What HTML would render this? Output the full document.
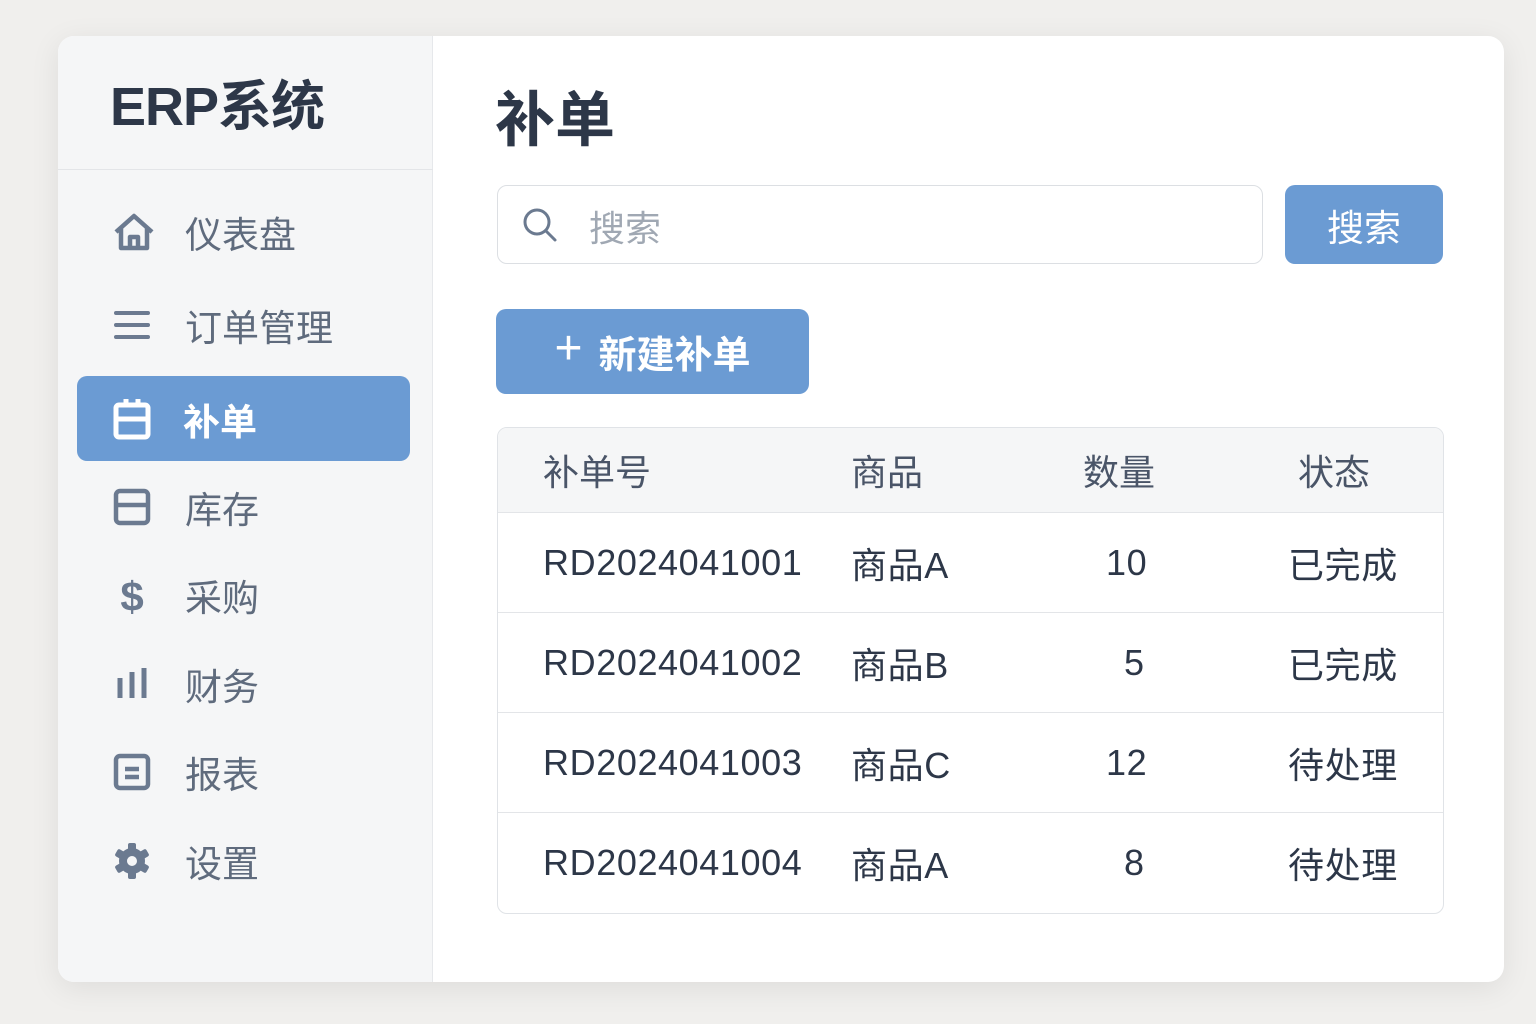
<!DOCTYPE html>
<html><head><meta charset="utf-8"><style>
*{margin:0;padding:0;box-sizing:border-box}
body{width:1536px;height:1024px;background:#f0efed;font-family:"Liberation Sans","Noto Sans CJK SC",sans-serif;position:relative;overflow:hidden}
.card{position:absolute;left:58px;top:36px;width:1446px;height:946px;background:#fff;border-radius:16px;box-shadow:0 6px 30px rgba(0,0,0,.08);overflow:hidden}
.side{position:absolute;left:0;top:0;width:375px;height:100%;background:#f5f6f7;border-right:1px solid #e6e8eb}
.logo{position:absolute;left:52px;top:26px;font-size:54px;font-weight:bold;color:#2d3748;letter-spacing:-1px}
.div{position:absolute;left:0;top:133px;width:375px;height:1px;background:#e3e5e8}
.nav{position:absolute;left:0;width:375px;height:60px;font-size:37px;color:#5f6b7d;display:flex;align-items:center}
.nav svg{position:absolute;left:54px}
.nav span{position:absolute;left:127px}
.active{left:19px;width:333px;height:85px;background:#6b9bd3;border-radius:10px;color:#fff;font-weight:bold}
.active svg{left:35px}.active span{left:106px}
.abs{position:absolute}
.title{left:437px;top:36px;font-size:60px;font-weight:bold;color:#2d3748}
.search{left:439px;top:149px;width:766px;height:79px;border:1.5px solid #dcdfe3;border-radius:10px}
.btn{background:#6b9bd3;color:#fff;border-radius:10px;display:flex;align-items:center;justify-content:center;font-size:37px}
.table{left:439px;top:391px;width:947px;height:487px;border:1.5px solid #e0e3e7;border-radius:10px;overflow:hidden}
.row{position:absolute;left:0;width:100%;height:100px;border-top:1.5px solid #e3e5e8;font-size:36px;color:#2d3748;letter-spacing:0.6px}
.row div{position:absolute;top:50%;transform:translateY(-50%)}
.hd{top:0;height:84px;border-top:none;background:#f5f6f7;color:#4a5568;letter-spacing:0}
</style></head><body>
<div class="card">
<div class="side">
<div class="logo">ERP系统</div>
<div class="div"></div>
<div class="nav" style="top:166px"><svg width="44" height="44" viewBox="0 0 44 44" fill="none" stroke="#6b7a90" stroke-width="4.5" stroke-linejoin="round"><path d="M4 22 L22 6 L40 22 M9 18 V38 H35 V18 M18 38 V27 H26 V38"/></svg><span>仪表盘</span></div>
<div class="nav" style="top:259px"><svg width="40" height="40" viewBox="0 0 40 40" stroke="#6b7a90" stroke-width="4" stroke-linecap="round"><path d="M4 8H36M4 20H36M4 32H36"/></svg><span>订单管理</span></div>
<div class="nav active" style="top:340px"><svg width="40" height="44" viewBox="0 0 40 44" fill="none" stroke="#fff" stroke-width="5"><rect x="4" y="8" width="32" height="32" rx="3"/><path d="M4 22H36M14 2V10M26 2V10"/></svg><span>补单</span></div>
<div class="nav" style="top:441px"><svg width="40" height="40" viewBox="0 0 40 40" fill="none" stroke="#6b7a90" stroke-width="4.5"><rect x="4" y="4" width="32" height="32" rx="4"/><path d="M4 18H36"/></svg><span>库存</span></div>
<div class="nav" style="top:529px"><svg width="40" height="44" viewBox="0 0 40 44"><text x="20" y="38" font-size="42" font-weight="bold" fill="#6b7a90" text-anchor="middle" font-family="Liberation Sans">$</text></svg><span>采购</span></div>
<div class="nav" style="top:618px"><svg width="40" height="40" viewBox="0 0 40 40" stroke="#6b7a90" stroke-width="5"><path d="M8 14V34M20 8V34M32 4V34"/></svg><span>财务</span></div>
<div class="nav" style="top:706px"><svg width="40" height="40" viewBox="0 0 40 40" fill="none" stroke="#6b7a90" stroke-width="4.5"><rect x="4" y="4" width="32" height="32" rx="4"/><path d="M13 17H27M13 25H27"/></svg><span>报表</span></div>
<div class="nav" style="top:795px"><svg width="40" height="40" viewBox="0 0 40 40"><g fill="#6b7a90"><circle cx="20" cy="20" r="13"/><rect x="16" y="2" width="8" height="36" rx="2"/><rect x="16" y="2" width="8" height="36" rx="2" transform="rotate(60 20 20)"/><rect x="16" y="2" width="8" height="36" rx="2" transform="rotate(120 20 20)"/></g><circle cx="20" cy="20" r="5" fill="#f5f6f7"/></svg><span>设置</span></div>
</div>
<div class="abs title">补单</div>
<div class="abs search"><svg class="abs" style="left:24px;top:21px" width="36" height="36" viewBox="0 0 36 36" fill="none" stroke="#6b7a90" stroke-width="3"><circle cx="15" cy="15" r="12"/><path d="M24 24L33 33" stroke-linecap="round"/></svg><div class="abs" style="left:91px;top:14px;font-size:36px;color:#a0a8b3">搜索</div></div>
<div class="abs btn" style="left:1227px;top:149px;width:158px;height:79px">搜索</div>
<div class="abs btn" style="left:438px;top:273px;width:313px;height:85px;font-weight:bold;font-size:38px"><span style="font-weight:normal;font-size:48px;margin-right:16px;margin-top:-6px">+</span>新建补单</div>
<div class="abs table">
<div class="row hd"><div style="left:45px">补单号</div><div style="left:353px">商品</div><div style="left:585px">数量</div><div style="left:800px">状态</div></div>
<div class="row" style="top:84px"><div style="left:45px">RD2024041001</div><div style="left:353px">商品A</div><div style="left:608px">10</div><div style="left:790px">已完成</div></div>
<div class="row" style="top:184px"><div style="left:45px">RD2024041002</div><div style="left:353px">商品B</div><div style="left:626px">5</div><div style="left:790px">已完成</div></div>
<div class="row" style="top:284px"><div style="left:45px">RD2024041003</div><div style="left:353px">商品C</div><div style="left:608px">12</div><div style="left:790px">待处理</div></div>
<div class="row" style="top:384px"><div style="left:45px">RD2024041004</div><div style="left:353px">商品A</div><div style="left:626px">8</div><div style="left:790px">待处理</div></div>
</div>
</div>
</body></html>
